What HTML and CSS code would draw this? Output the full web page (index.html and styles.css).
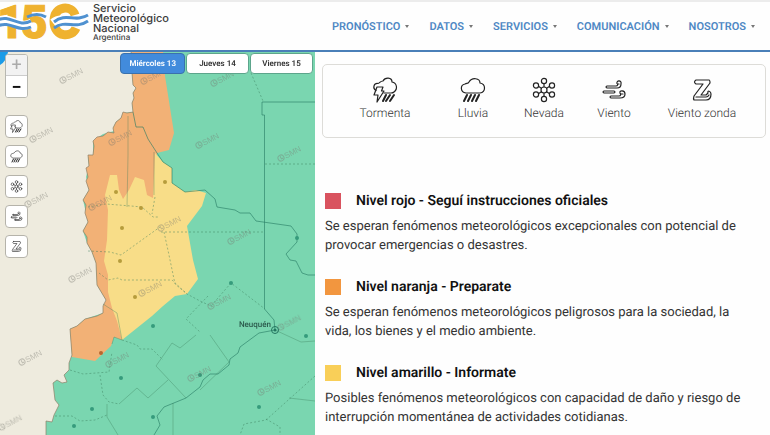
FILE: index.html
```html
<!DOCTYPE html>
<html lang="es">
<head>
<meta charset="utf-8">
<meta name="viewport" content="width=device-width, initial-scale=1">
<title>Servicio Meteorológico Nacional</title>
<link rel="stylesheet" href="styles.css">
</head>
<body>
<svg class="defs" aria-hidden="true">
  <symbol id="storm" viewBox="0 0 26 26">
    <path d="M4 13.500C0 11 2 6 6 6.500C8 6 8 4 11 4C13 0 20 0 20 5C25 6 26 12 22 15Q21 16 19 16H12"/>
    <path d="M5 10H11L9.500 14H12L5 25L6 18H2Z"/>
    <path class="rain" d="M14 18L11 24M18 18L14 24M22 18L18 24"/>
  </symbol>
  <symbol id="rain" viewBox="0 0 26 26">
    <path d="M6 16C0 15 0 8 5 7C7 6 8 7 9 5C12 0 20 1 20 6C26 7 26 15 20 16Z"/>
    <path class="rain" d="M7 18L4 24M11 18L8 24M15 18L12 24M19 18L16 24"/>
  </symbol>
  <symbol id="snow" viewBox="0 0 26 26">
    <path d="M13 6V20M7 9L19 17M19 9L7 17"/>
    <g class="hollow"><circle cx="13" cy="13" r="3"/><circle cx="13" cy="4" r="2.600"/><circle cx="13" cy="22" r="2.600"/><circle cx="5" cy="8.500" r="2.600"/><circle cx="21" cy="8.500" r="2.600"/><circle cx="5" cy="17.500" r="2.600"/><circle cx="21" cy="17.500" r="2.600"/></g>
  </symbol>
  <symbol id="wind" viewBox="0 0 26 26">
    <path d="M6 9H15C17 9 17 7 16 6.500C15 3 21 3 20 7Q20 11 16 11H6Q4 10 6 9ZM3 14H13Q15 15 13 16H3Q1 15 3 14ZM10 19H18C20 19 20 17 19 16C18 13 24 13 24 17Q24 21 19 21H10Q8 20 10 19Z"/>
    <path d="M17 7H18M20 17H22"/>
  </symbol>
  <symbol id="zonda" viewBox="0 0 26 26">
    <path d="M7 3H20Q21 3 21 6L12 18H17L19 16C18 13 22 14 22 17Q22 23 17 23H5Q4 22 5 19L14 7H7Q4 5 7 3Z"/>
    <path d="M7 20H17Q19 20 20 18"/>
  </symbol>
  <symbol id="mark" viewBox="-6 -20 36 30">
    <g transform="rotate(-28)"><circle r="3"/><path d="M0-2V1H2"/><text x="4" y="3">SMN</text></g>
  </symbol>
</svg>

<header class="header">
  <a class="brand" href="#">
    <svg class="logo" viewBox="0 0 90 44" aria-hidden="true">
      <text class="logo-number" x="-3" y="36">1</text>
      <text class="logo-number" x="21" y="36">5</text>
      <path class="logo-ring" d="M75 13C72 3 54 3 54 19C54 36 72 36 76 26"/>
      <path class="wave-gap" d="M-2 20C10 12 18 29 32 21M53 21C65 12 73 27 88 17"/>
      <path class="wave" d="M-2 18C10 12 18 26 31 19M-2 24C10 18 18 31 31 25M27 15Q37 10 46 15M54 20C66 10 75 21 88 13M54 26C66 17 75 28 88 19"/>
    </svg>
    <span class="brand-name">Servicio<br>Meteorológico<br>Nacional<small>Argentina</small></span>
  </a>
  <nav class="nav">
    <a href="#">PRONÓSTICO</a>
    <a href="#">DATOS</a>
    <a href="#">SERVICIOS</a>
    <a href="#">COMUNICACIÓN</a>
    <a href="#">NOSOTROS</a>
  </nav>
</header>

<main class="main">
  <section class="map" aria-label="Mapa de alertas">
    <svg class="map-drawing" viewBox="0 52 315 383" preserveAspectRatio="xMinYMin slice">
      <path class="green" d="M131 50L132 73L133 85L136 88L133 93L134 98L132 103L133 112L123 113L121 118L116 122L113 128L114 131L103 134L93 141L93 155L88 157L89 166L86 177L89 190L83 200L88 222L83 231L87 243L92 252L96 263L97 285L106 300L103 313L85 319L77 326L70 329L72 355L69 363V370L64 375L67 382L62 383L57 380L53 383L55 400L59 405L54 415L52 422L46 421V437H317V50Z"/>
      <path class="orange" d="M131 50L132 73L133 85L136 88L133 93L134 98L132 103L133 112L127 113L123 112L121 118L116 122L113 128L114 133L108 132L103 136L97 137L93 141L94 146L93 155L88 155L89 166L86 168L88 177L86 181L89 190L83 200L86 205L85 213L88 222L83 231L87 237V243L92 252L96 263L97 285L106 300L103 306V313L97 316L85 319L77 326L70 329L72 357L95 361L111 346L114 337L122 340L130 310L157 200V153L169 150L174 133L165 76L163 50Z"/>
      <path class="yellow" d="M155 153L163 162L172 168V183L185 192L196 190L206 193L202 206L187 226L193 260L198 279L187 294L175 296L163 306L152 316L122 340L117 321L112 308L108 292V275L104 261L107 240L108 210L105 195L110 175H117L119 190L123 199L129 190L135 177L144 180L147 195L153 198L154 176Z"/>
      <path class="coast" d="M131 50L132 73L133 85L136 88L133 93L134 98L132 103L133 112L127 113L123 112L121 118L116 122L113 128L114 133L108 132L103 136L97 137L93 141L94 146L93 155L88 155L89 166L86 168L88 177L86 181L89 190L83 200L86 205L85 213L88 222L83 231L87 237V243L92 252L96 263L97 285L106 300L103 306V313L97 316L85 319L77 326L70 329L72 355L69 363V370L64 375L67 382L62 383L57 380L53 383L55 400L59 405L54 415L52 422L46 421V437"/>
      <path class="province" d="M133 112L136 127L143 127L148 139L157 153L163 162L172 168V183L185 192L205 190L215 199L217 207L235 210L240 213H250L256 221L291 226L297 234V242L286 254L290 260L296 261L302 273L308 275H315M315 102H262V115H264.500V309L274 320L275 330L259 333L240 347L238 353L230 359L229 365L218 374H210L203 380L200 387L186 398L164 407L157 416L160 425L154 435"/>
      <path class="border" d="M128 116V155L127 207M154 152V195M103 304L117 313L122 340L114 337L112 344M210 335L229 362L200 390M196 335L180 348L172 343L156 366L186 398M168 380L148 398L137 388L119 404M173 403V435M275 330L301 342L315 341M289 398L315 401M107 404V417L118 435"/>
      <path class="dashed" d="M251 73L263 101M265 164H315M88 207L106 204L131 206L142 207L153 217H159M155 197L152 214M88 251L110 252L121 255L160 227M161 232H264M164 232L169 255L175 284L187 294L200 301L211 306L231 283L265 309M99 273L108 280L118 278L122 280H172L187 294M122 340L137 345L140 349L152 349L163 360M208 296L186 319L200 332M70 370L83 374L109 372L112 352M100 375L103 395L109 402L119 404M55 416L72 416L80 421L95 420L107 415M315 376L266 420L244 424L240 435M266 419L280 427V435"/>
      <g class="dots"><circle cx="116" cy="192" r="2"/><circle cx="165" cy="182" r="2"/><circle cx="141" cy="208" r="2"/><circle cx="122" cy="228" r="2"/><circle cx="120" cy="261" r="2"/><circle cx="135" cy="297" r="2"/></g>
      <circle class="dot-red" cx="101" cy="353" r="2"/>
      <g class="dots-green"><circle cx="297" cy="238" r="2"/><circle cx="231" cy="283" r="2"/><circle cx="153" cy="326" r="2"/><circle cx="306" cy="336" r="2"/><circle cx="200" cy="375" r="2"/><circle cx="121" cy="378" r="2"/><circle cx="92" cy="409" r="2"/><circle cx="74" cy="426" r="2"/><circle cx="153" cy="417" r="2"/><circle cx="259" cy="407" r="2"/></g>
      <g class="marks">
        <use href="#mark" x="57" y="60" width="36" height="30"/><use href="#mark" x="138" y="61" width="36" height="30"/><use href="#mark" x="208" y="63" width="36" height="30"/><use href="#mark" x="27" y="119" width="36" height="30"/><use href="#mark" x="106" y="122" width="36" height="30"/><use href="#mark" x="193" y="125" width="36" height="30"/><use href="#mark" x="275" y="138" width="36" height="30"/><use href="#mark" x="22" y="184" width="36" height="30"/><use href="#mark" x="86" y="187" width="36" height="30"/><use href="#mark" x="155" y="208" width="36" height="30"/><use href="#mark" x="225" y="221" width="36" height="30"/><use href="#mark" x="66" y="259" width="36" height="30"/><use href="#mark" x="136" y="273" width="36" height="30"/><use href="#mark" x="205" y="286" width="36" height="30"/><use href="#mark" x="275" y="307" width="36" height="30"/><use href="#mark" x="16" y="342" width="36" height="30"/><use href="#mark" x="103" y="344" width="36" height="30"/><use href="#mark" x="185" y="358" width="36" height="30"/><use href="#mark" x="255" y="372" width="36" height="30"/><use href="#mark" x="-4" y="407" width="36" height="30"/>
      </g>
      <text class="city" x="271" y="327">Neuquén</text>
      <circle class="capital" cx="275" cy="330" r="3.500"/><circle class="capital-dot" cx="275" cy="330" r="1.500"/>
      <path class="corner" d="M0 52H8Q6 62 0 65Z"/>
    </svg>
    <div class="tools">
      <div class="zoom"><button type="button" aria-label="Acercar" disabled>+</button><button type="button" aria-label="Alejar">−</button></div>
      <button class="tool" type="button" aria-label="Tormenta"><svg class="icon"><use href="#storm"/></svg></button>
      <button class="tool" type="button" aria-label="Lluvia"><svg class="icon"><use href="#rain"/></svg></button>
      <button class="tool" type="button" aria-label="Nevada"><svg class="icon"><use href="#snow"/></svg></button>
      <button class="tool" type="button" aria-label="Viento"><svg class="icon"><use href="#wind"/></svg></button>
      <button class="tool" type="button" aria-label="Viento zonda"><svg class="icon"><use href="#zonda"/></svg></button>
    </div>
    <div class="days">
      <button class="day active" type="button">Miércoles 13</button>
      <button class="day" type="button">Jueves 14</button>
      <button class="day" type="button">Viernes 15</button>
    </div>
  </section>

  <section class="info">
    <ul class="phenomena">
      <li><svg class="icon"><use href="#storm"/></svg>Tormenta</li>
      <li><svg class="icon"><use href="#rain"/></svg>Lluvia</li>
      <li><svg class="icon"><use href="#snow"/></svg>Nevada</li>
      <li><svg class="icon"><use href="#wind"/></svg>Viento</li>
      <li><svg class="icon"><use href="#zonda"/></svg>Viento zonda</li>
    </ul>
    <div class="levels">
      <article class="level">
        <h2 class="red-level">Nivel rojo - Seguí instrucciones oficiales</h2>
        <p>Se esperan fenómenos meteorológicos excepcionales con potencial de provocar emergencias o desastres.</p>
      </article>
      <article class="level">
        <h2 class="orange-level">Nivel naranja - Preparate</h2>
        <p>Se esperan fenómenos meteorológicos peligrosos para la sociedad, la vida, los bienes y el medio ambiente.</p>
      </article>
      <article class="level">
        <h2 class="yellow-level">Nivel amarillo - Informate</h2>
        <p>Posibles fenómenos meteorológicos con capacidad de daño y riesgo de interrupción momentánea de actividades cotidianas.</p>
      </article>
    </div>
  </section>
</main>
</body>
</html>
```
FILE: styles.css
```css
* { box-sizing: border-box; }
body { margin: 0; background: #fefefe; color: #333; font-family: Roboto, "Liberation Sans", sans-serif; text-rendering: geometricPrecision; }
.defs { position: absolute; width: 0; height: 0; }

.header { display: flex; justify-content: space-between; align-items: stretch; height: 52px; border-top: 2px solid #ececec; border-bottom: 2px solid #4a7fb8; }
.brand { display: flex; color: #3c3c3c; text-decoration: none; }
.logo { width: 90px; height: 44px; margin-right: 3px; overflow: visible; }
.logo-number { font: 900 46px Roboto, sans-serif; fill: #efb22f; stroke: #efb22f; stroke-width: 1; }
.logo-ring { fill: none; stroke: #efb22f; stroke-width: 9; }
.wave-gap { fill: none; stroke: #fff; stroke-width: 9; }
.wave { fill: none; stroke: #4f91d0; stroke-width: 3; }
.brand-name { padding-top: 1px; font: 500 11px/10px Inter, sans-serif; }
.brand-name small { display: block; font-size: 8px; line-height: 9px; }

.nav { display: flex; align-items: center; gap: 20px; padding-right: 15px; }
.nav a { display: flex; align-items: center; gap: 5px; color: #4f88c4; font-size: 11px; font-weight: 600; text-decoration: none; }
.nav a::after { content: ""; border: 2px solid transparent; border-top: 3px solid #777; border-bottom: 0; }

.main { display: grid; grid-template-columns: 315fr 455fr; min-height: calc(100vh - 52px); }
.map { position: relative; overflow: hidden; background: #eeebde; }
.map-drawing { display: block; width: 100%; height: 100%; }
.green { fill: #7ad6b0; }
.orange { fill: #f2b176; }
.yellow { fill: #f8dd88; }
.coast { fill: none; stroke: #8d8068; stroke-width: 1; opacity: 0.7; }
.province { fill: none; stroke: #247a62; stroke-width: 1; opacity: 0.6; stroke-linejoin: round; }
.border { fill: none; stroke: #397c5a; stroke-width: 1; opacity: 0.35; }
.dashed { fill: none; stroke: #397c5a; stroke-width: 1; stroke-dasharray: 2 2; opacity: 0.45; }
.dots { fill: #b69c3c; }
.dot-red { fill: #b8672f; }
.dots-green { fill: #369b7c; }
.marks { opacity: 0.4; fill: none; stroke: #77776f; stroke-width: 1; }
#mark text { font: 8px "Liberation Sans", sans-serif; fill: #77776f; stroke: none; }
.city { font: 500 8px Roboto, sans-serif; fill: #2b5a4c; text-anchor: end; }
.capital { fill: none; stroke: #23745f; stroke-width: 1; }
.capital-dot { fill: #23745f; }
.corner { fill: #1b9be8; }

.tools { position: absolute; top: 2px; left: 5px; display: flex; flex-direction: column; gap: 7px; }
.zoom { display: flex; flex-direction: column; margin-bottom: 10px; border: 1px solid #b8b8b1; border-radius: 3px; background: #fff; overflow: hidden; }
.zoom button { height: 21px; padding: 0; border: 0; background: #fff; color: #111; font: 700 18px/20px Roboto, sans-serif; }
.zoom button:disabled { background: #f2f2f2; color: #aaa; font-weight: 400; border-bottom: 1px solid #ccc; }
.tool { display: grid; place-items: center; width: 23px; height: 23px; padding: 0; border: 1px solid #b5b3aa; border-radius: 4px; background: #fff; }
.icon { width: 26px; height: 26px; fill: none; stroke: #222; stroke-width: 1.2; stroke-linecap: round; stroke-linejoin: round; }
.tool .icon { width: 13px; height: 13px; }
.rain { stroke-width: 2; }
.hollow { fill: #fff; }

.days { position: absolute; top: 1px; right: 2px; display: flex; gap: 1px; }
.day { min-width: 63px; height: 21px; padding: 0 8px; border: 1px solid #5da58c; border-radius: 4px; background: #fff; color: #333; font: 600 8px Roboto, sans-serif; white-space: nowrap; text-rendering: geometricPrecision; }
.active { border-color: #3a71ad; background: #428bdc; color: #fff; }

.info { padding: 12px 4px 0 7px; }
.phenomena { display: grid; grid-template-columns: 104fr 72fr 70fr 70fr 106fr; margin: 0; padding: 12px 10px 16px; border: 1px solid #dddcd8; border-radius: 5px; list-style: none; }
.phenomena li { display: flex; flex-direction: column; align-items: center; gap: 2px; font-size: 12px; line-height: 16px; font-weight: 300; color: #333; white-space: nowrap; }
.levels { display: grid; gap: 22px; padding: 53px 24px 0 3px; }
.level h2 { display: flex; align-items: center; gap: 15px; margin: 0 0 6px; color: #111; font-size: 14px; line-height: 20px; font-weight: 600; }
.level h2::before { content: ""; width: 16px; height: 16px; background: #d9535f; }
.level .orange-level::before { background: #f2963f; }
.level .yellow-level::before { background: #f9cf58; }
.level p { margin: 0; font-size: 13px; line-height: 19px; }
```
